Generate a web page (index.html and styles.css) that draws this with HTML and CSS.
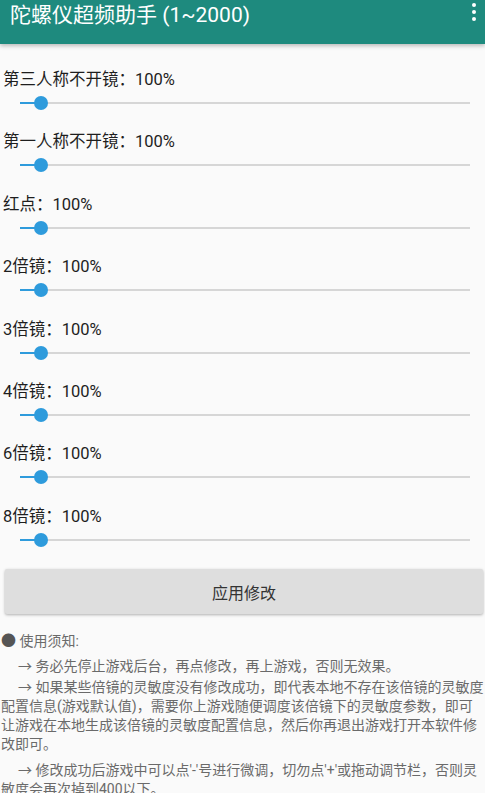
FILE: index.html
```html
<!DOCTYPE html>
<html lang="zh-CN">
<head>
<meta charset="UTF-8" />
<meta name="viewport" content="width=device-width, initial-scale=1" />
<title>陀螺仪超频助手</title>
<link rel="stylesheet" href="styles.css">
</head>
<body>
  <header class="appbar">
    <h1 class="appbar-title">陀螺仪超频助手 (1~2000)</h1>
    <div class="overflow" aria-label="更多选项">
      <span></span><span></span><span></span>
    </div>
  </header>

  <main class="content">
    <div class="setting">
      <div class="setting-label">第三人称不开镜：100%</div>
      <div class="slider"><div class="track"><div class="fill"></div><div class="thumb"></div></div></div>
    </div>
    <div class="setting">
      <div class="setting-label">第一人称不开镜：100%</div>
      <div class="slider"><div class="track"><div class="fill"></div><div class="thumb"></div></div></div>
    </div>
    <div class="setting">
      <div class="setting-label">红点：100%</div>
      <div class="slider"><div class="track"><div class="fill"></div><div class="thumb"></div></div></div>
    </div>
    <div class="setting">
      <div class="setting-label">2倍镜：100%</div>
      <div class="slider"><div class="track"><div class="fill"></div><div class="thumb"></div></div></div>
    </div>
    <div class="setting">
      <div class="setting-label">3倍镜：100%</div>
      <div class="slider"><div class="track"><div class="fill"></div><div class="thumb"></div></div></div>
    </div>
    <div class="setting">
      <div class="setting-label">4倍镜：100%</div>
      <div class="slider"><div class="track"><div class="fill"></div><div class="thumb"></div></div></div>
    </div>
    <div class="setting">
      <div class="setting-label">6倍镜：100%</div>
      <div class="slider"><div class="track"><div class="fill"></div><div class="thumb"></div></div></div>
    </div>
    <div class="setting">
      <div class="setting-label">8倍镜：100%</div>
      <div class="slider"><div class="track"><div class="fill"></div><div class="thumb"></div></div></div>
    </div>

    <button class="apply-btn" type="button">应用修改</button>

    <div class="notes">
      <p class="notes-title"><span class="dot">●</span> 使用须知:</p>
      <p class="indent">→ 务必先停止游戏后台，再点修改，再上游戏，否则无效果。</p>
      <p class="indent">→ 如果某些倍镜的灵敏度没有修改成功，即代表本地不存在该倍镜的灵敏度<br>配置信息(游戏默认值)，需要你上游戏随便调度该倍镜下的灵敏度参数，即可<br>让游戏在本地生成该倍镜的灵敏度配置信息，然后你再退出游戏打开本软件修<br>改即可。</p>
      <p class="indent last">→ 修改成功后游戏中可以点'-'号进行微调，切勿点'+'或拖动调节栏，否则灵<br>敏度会再次掉到400以下。</p>
    </div>
  </main>
</body>
</html>
```

FILE: styles.css
```css
/* Reset */
* {
  box-sizing: border-box;
}
body {
  margin: 0;
  background: #fafafa;
  font-family: Roboto, "Noto Sans CJK SC", sans-serif;
  color: #212121;
  overflow: hidden;
}

/* App bar */
.appbar {
  height: 44px;
  background: #1e8a7e;
  display: flex;
  justify-content: space-between;
  align-items: flex-start;
  padding: 0 9px 0 10px;
  box-shadow: 0 2px 4px rgba(0, 0, 0, 0.25);
  position: relative;
  z-index: 1;
}
.appbar-title {
  margin: 0;
  font-size: 21px;
  font-weight: 400;
  line-height: 30px;
  color: #fff;
  white-space: nowrap;
}
.overflow {
  display: flex;
  flex-direction: column;
  gap: 3px;
  padding-top: 3px;
}
.overflow span {
  width: 4px;
  height: 4px;
  border-radius: 50%;
  background: #fff;
}

/* Settings */
.content {
  padding: 26px 0 0;
}
.setting {
  padding-left: 3px;
  margin-bottom: 16.4px;
}
.setting-label {
  font-size: 16.5px;
  line-height: 20px;
  color: #1e1e1e;
  white-space: nowrap;
}
.slider {
  height: 26px;
  display: flex;
  align-items: center;
  padding: 0 15px 0 17px;
}
.track {
  position: relative;
  width: 100%;
  height: 2px;
  background: #d6d6d6;
}
.fill {
  width: 21px;
  height: 100%;
  background: #2e9bdc;
}
.thumb {
  position: absolute;
  left: 14px;
  top: -6px;
  width: 14px;
  height: 14px;
  border-radius: 50%;
  background: #2e9bdc;
}

/* Button */
.apply-btn {
  display: block;
  width: 478px;
  height: 45px;
  margin: 0 0 0 5px;
  border: none;
  border-radius: 2px;
  background: #dedede;
  box-shadow: 0 1px 3px rgba(0, 0, 0, 0.3);
  font-family: Roboto, "Noto Sans CJK SC", sans-serif;
  font-size: 16px;
  color: #333;
}

/* Notes */
.notes {
  margin-top: 18px;
  padding-left: 1px;
  font-size: 14px;
  line-height: 19px;
  color: #6a6a6a;
  white-space: nowrap;
}
.notes p {
  margin: 0;
}
.notes-title {
  margin-bottom: 6px !important;
}
.dot {
  color: #555;
  font-size: 15px;
}
.indent {
  text-indent: 17px;
  margin-bottom: 2px !important;
}
.last {
  margin-top: 7px !important;
}
```
